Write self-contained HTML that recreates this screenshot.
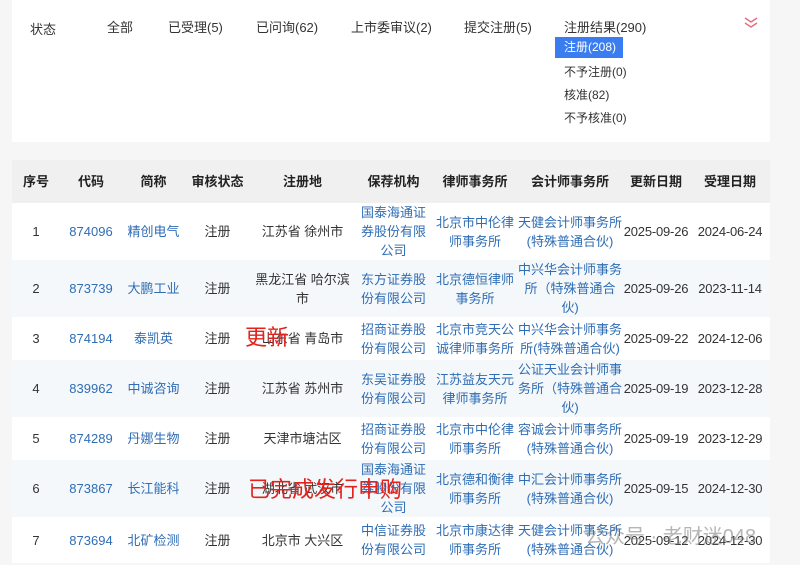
<!DOCTYPE html>
<html><head><meta charset="utf-8"><style>
*{margin:0;padding:0;box-sizing:border-box}
body{width:800px;height:565px;background:#f6f6f6;font-family:"Liberation Sans","Noto Sans CJK SC",sans-serif;font-size:13px;color:#333;position:relative;overflow:hidden}
.card{position:absolute;left:12px;top:0;width:758px;height:142px;background:#fff}
.a{position:absolute;white-space:nowrap}
table{position:absolute;left:12px;top:160px;width:758px;border-collapse:collapse;table-layout:fixed}
td,th{text-align:center;vertical-align:middle;line-height:19px;padding:0;font-size:13px;overflow:hidden}
th{background:#f0f0f0;height:43px;font-weight:bold;color:#222}
td.d{white-space:nowrap;letter-spacing:-0.2px}
tr:nth-child(odd) td{background:#f4f8fb}
tr:nth-child(even) td{background:#fff}
.b{color:#2f6db5}
.red{position:absolute;color:#e3221c;font-size:22px;white-space:nowrap}
</style></head><body>
<div class="card"></div>
<div class="a" style="left:30px;top:19px">状态</div>
<div class="a" style="left:107px;top:17px">全部</div>
<div class="a" style="left:168px;top:17px">已受理(5)</div>
<div class="a" style="left:256px;top:17px">已问询(62)</div>
<div class="a" style="left:351px;top:17px">上市委审议(2)</div>
<div class="a" style="left:464px;top:17px">提交注册(5)</div>
<div class="a" style="left:564px;top:17px">注册结果(290)</div>
<div class="a" style="left:555px;top:37px;width:68px;height:21px;background:#3a7df0;color:#fff;font-size:12px;line-height:21px;padding-left:9px">注册(208)</div>
<div class="a" style="left:564px;top:63px;font-size:12px">不予注册(0)</div>
<div class="a" style="left:564px;top:86px;font-size:12px">核准(82)</div>
<div class="a" style="left:564px;top:109px;font-size:12px">不予核准(0)</div>
<svg class="a" style="left:743px;top:15px" width="16" height="16" viewBox="0 0 16 16"><path d="M2 3l6 4 6-4M2 8l6 4 6-4" fill="none" stroke="#e5707e" stroke-width="1.5"/></svg>
<table>
<colgroup><col style="width:48px"><col style="width:62px"><col style="width:63px"><col style="width:65px"><col style="width:105px"><col style="width:77px"><col style="width:86px"><col style="width:104px"><col style="width:68px"><col style="width:80px"></colgroup>
<tr><th>序号</th><th>代码</th><th>简称</th><th>审核状态</th><th>注册地</th><th>保荐机构</th><th>律师事务所</th><th>会计师事务所</th><th>更新日期</th><th>受理日期</th></tr>
<tr style="height:57px"><td>1</td><td class="b">874096</td><td class="b">精创电气</td><td>注册</td><td>江苏省 徐州市</td><td class="b">国泰海通证券股份有限公司</td><td class="b">北京市中伦律师事务所</td><td class="b">天健会计师事务所(特殊普通合伙)</td><td class="d">2025-09-26</td><td class="d">2024-06-24</td></tr>
<tr style="height:56px"><td>2</td><td class="b">873739</td><td class="b">大鹏工业</td><td>注册</td><td>黑龙江省 哈尔滨市</td><td class="b">东方证券股份有限公司</td><td class="b">北京德恒律师事务所</td><td class="b">中兴华会计师事务所（特殊普通合伙)</td><td class="d">2025-09-26</td><td class="d">2023-11-14</td></tr>
<tr style="height:43px"><td>3</td><td class="b">874194</td><td class="b">泰凯英</td><td>注册</td><td>山东省 青岛市</td><td class="b">招商证券股份有限公司</td><td class="b">北京市竞天公诚律师事务所</td><td class="b">中兴华会计师事务所(特殊普通合伙)</td><td class="d">2025-09-22</td><td class="d">2024-12-06</td></tr>
<tr style="height:56px"><td>4</td><td class="b">839962</td><td class="b">中诚咨询</td><td>注册</td><td>江苏省 苏州市</td><td class="b">东吴证券股份有限公司</td><td class="b">江苏益友天元律师事务所</td><td class="b">公证天业会计师事务所（特殊普通合伙)</td><td class="d">2025-09-19</td><td class="d">2023-12-28</td></tr>
<tr style="height:43px"><td>5</td><td class="b">874289</td><td class="b">丹娜生物</td><td>注册</td><td>天津市塘沽区</td><td class="b">招商证券股份有限公司</td><td class="b">北京市中伦律师事务所</td><td class="b">容诚会计师事务所(特殊普通合伙)</td><td class="d">2025-09-19</td><td class="d">2023-12-29</td></tr>
<tr style="height:55px"><td>6</td><td class="b">873867</td><td class="b">长江能科</td><td>注册</td><td>湖北省 武汉市</td><td class="b">国泰海通证券股份有限公司</td><td class="b">北京德和衡律师事务所</td><td class="b">中汇会计师事务所(特殊普通合伙)</td><td class="d">2025-09-15</td><td class="d">2024-12-30</td></tr>
<tr style="height:46px"><td>7</td><td class="b">873694</td><td class="b">北矿检测</td><td>注册</td><td>北京市 大兴区</td><td class="b">中信证券股份有限公司</td><td class="b">北京市康达律师事务所</td><td class="b">天健会计师事务所(特殊普通合伙)</td><td class="d">2025-09-12</td><td class="d">2024-12-30</td></tr>
</table>
<div class="red" style="left:245px;top:320px">更新</div>
<div class="red" style="left:248px;top:472px">已完成发行申购</div>
<div class="a" style="left:585px;top:520px;color:rgba(120,120,120,.55);font-size:20px">公众号 · 老财迷048</div>
</body></html>
